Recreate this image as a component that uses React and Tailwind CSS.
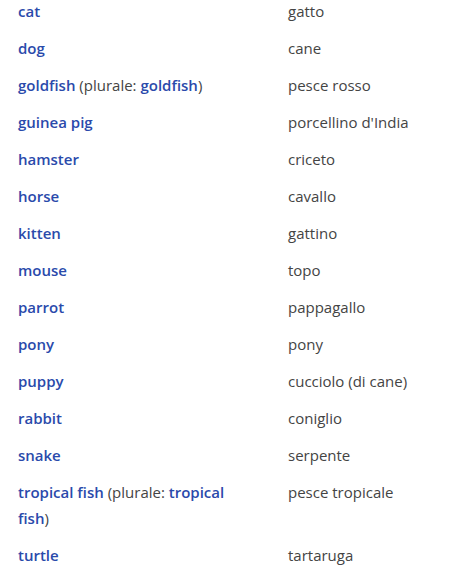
import React from 'react';

const rows = [
  { en: 'cat', it: 'gatto' },
  { en: 'dog', it: 'cane' },
  { en: 'goldfish', plural: 'goldfish', it: 'pesce rosso' },
  { en: 'guinea pig', it: "porcellino d'India" },
  { en: 'hamster', it: 'criceto' },
  { en: 'horse', it: 'cavallo' },
  { en: 'kitten', it: 'gattino' },
  { en: 'mouse', it: 'topo' },
  { en: 'parrot', it: 'pappagallo' },
  { en: 'pony', it: 'pony' },
  { en: 'puppy', it: 'cucciolo (di cane)' },
  { en: 'rabbit', it: 'coniglio' },
  { en: 'snake', it: 'serpente' },
  { en: 'tropical fish', plural: 'tropical fish', it: 'pesce tropicale' },
  { en: 'turtle', it: 'tartaruga' },
];

const App = () => {
  return (
    <div
      className="bg-white min-h-screen text-[15px] leading-[26px] text-[#444]"
      style={{ fontFamily: '"Open Sans", sans-serif' }}
    >
      <div className="-mt-[7px]">
        {rows.map((row) => (
          <div key={row.en} className="flex pl-[18px] pt-[5px] pb-[6px]">
            <div className="w-[230px] shrink-0">
              <span className="font-semibold text-[#2a4aab]">{row.en}</span>
              {row.plural && (
                <>
                  {' '}(plurale: <span className="font-semibold text-[#2a4aab]">{row.plural}</span>)
                </>
              )}
            </div>
            <div className="ml-[40px]">{row.it}</div>
          </div>
        ))}
      </div>
    </div>
  );
};

export default App;
